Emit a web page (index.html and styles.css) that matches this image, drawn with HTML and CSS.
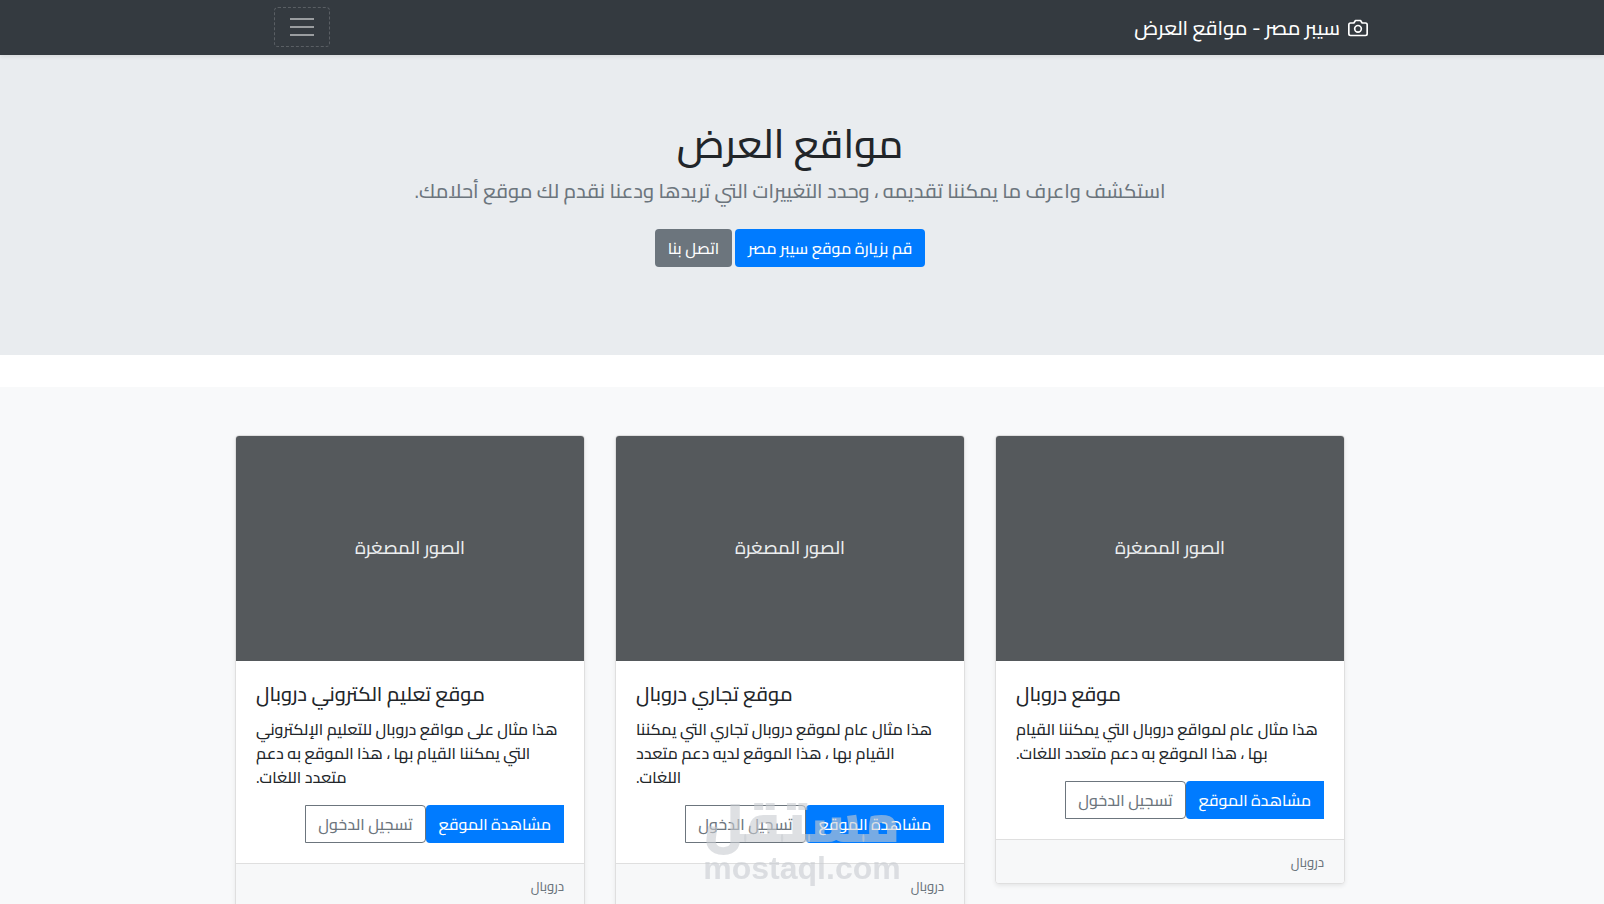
FILE: index.html
```html
<!DOCTYPE html>
<html lang="ar" dir="rtl">

<head>
	<meta charset="UTF-8">
	<meta name="viewport" content="width=device-width, initial-scale=1.0">
	<title>سيبر مصر - مواقع العرض</title>
	<link rel="stylesheet" href="styles.css">
</head>

<body>
	<header class="navbar">
		<div class="navbar-inner">
			<a class="brand" href="#">
				<svg width="20" height="20" viewBox="0 0 24 24" fill="none" stroke="currentColor" stroke-width="2" stroke-linecap="round" stroke-linejoin="round" aria-hidden="true">
					<path d="M23 19a2 2 0 0 1-2 2H3a2 2 0 0 1-2-2V8a2 2 0 0 1 2-2h4l2-3h6l2 3h4a2 2 0 0 1 2 2z"/>
					<circle cx="12" cy="13" r="4"/>
				</svg>
				<span>سيبر مصر - مواقع العرض</span>
			</a>
			<button class="toggler" type="button" aria-label="القائمة">
				<svg width="30" height="30" viewBox="0 0 30 30" stroke="currentColor" stroke-width="2" stroke-linecap="square" aria-hidden="true">
					<path d="M4 7h22M4 15h22M4 23h22"/>
				</svg>
			</button>
		</div>
	</header>

	<main>
		<section class="hero">
			<h1>مواقع العرض</h1>
			<p class="lead">استكشف واعرف ما يمكننا تقديمه ، وحدد التغييرات التي تريدها ودعنا نقدم لك موقع أحلامك.</p>
			<div class="hero-buttons">
				<a class="btn btn-primary" href="#">قم بزيارة موقع سيبر مصر</a>
				<a class="btn btn-secondary" href="#">اتصل بنا</a>
			</div>
		</section>

		<section class="album">
			<div class="cards">
				<article class="card">
					<div class="thumb">الصور المصغرة</div>
					<div class="card-body">
						<h2>موقع دروبال</h2>
						<p>هذا مثال عام لمواقع دروبال التي يمكننا القيام<br>بها ، هذا الموقع به دعم متعدد اللغات.</p>
						<div class="btn-group">
							<button type="button" class="btn btn-primary">مشاهدة الموقع</button>
							<button type="button" class="btn btn-outline">تسجيل الدخول</button>
						</div>
					</div>
					<footer class="card-footer">دروبال</footer>
				</article>

				<article class="card">
					<div class="thumb">الصور المصغرة</div>
					<div class="card-body">
						<h2>موقع تجاري دروبال</h2>
						<p>هذا مثال عام لموقع دروبال تجاري التي يمكننا<br>القيام بها ، هذا الموقع لديه دعم متعدد<br>اللغات.</p>
						<div class="btn-group">
							<button type="button" class="btn btn-primary">مشاهدة الموقع</button>
							<button type="button" class="btn btn-outline">تسجيل الدخول</button>
						</div>
					</div>
					<footer class="card-footer">دروبال</footer>
				</article>

				<article class="card">
					<div class="thumb">الصور المصغرة</div>
					<div class="card-body">
						<h2>موقع تعليم الكتروني دروبال</h2>
						<p>هذا مثال على مواقع دروبال للتعليم الإلكتروني<br>التي يمكننا القيام بها ، هذا الموقع به دعم<br>متعدد اللغات.</p>
						<div class="btn-group">
							<button type="button" class="btn btn-primary">مشاهدة الموقع</button>
							<button type="button" class="btn btn-outline">تسجيل الدخول</button>
						</div>
					</div>
					<footer class="card-footer">دروبال</footer>
				</article>
			</div>
		</section>
	</main>

	<div class="watermark">
		<span class="watermark-ar">مستقل</span>
		<span class="watermark-en">mostaql.com</span>
	</div>
</body>

</html>
```

FILE: styles.css
```css
*,
*::before,
*::after {
	box-sizing: border-box;
}

body {
	margin: 0;
	font-family: Cairo, "DejaVu Sans", sans-serif;
	font-size: 16px;
	font-weight: 500;
	line-height: 24px;
	color: #212529;
	background: #fff;
}

h1, h2, p {
	margin: 0;
	font-weight: 500;
}

a {
	text-decoration: none;
}

/* Navbar */
.navbar {
	position: relative;
	background: #343a40;
	box-shadow: 0 2px 4px rgba(0, 0, 0, 0.075);
}

.navbar-inner {
	display: flex;
	align-items: center;
	justify-content: space-between;
	max-width: 1140px;
	margin: 0 auto;
	padding: 7px 4px 8px 42px;
}

.brand {
	display: flex;
	align-items: center;
	gap: 8px;
	padding-top: 2px;
	color: #fff;
	font-size: 20px;
}

.toggler {
	display: flex;
	align-items: center;
	justify-content: center;
	width: 56px;
	height: 40px;
	padding: 0;
	color: rgba(255, 255, 255, 0.5);
	background: none;
	border: 1px dashed #5a5f64;
	border-radius: 4px;
}

/* Hero */
.hero {
	padding: 65px 24px 88px 0;
	text-align: center;
	background: #e9ecef;
	margin-bottom: 32px;
}

.hero h1 {
	font-size: 40px;
	line-height: 48px;
	margin-bottom: 8px;
}

.lead {
	font-size: 20px;
	line-height: 30px;
	color: #6c757d;
	margin-bottom: 23px;
}

.hero-buttons {
	display: flex;
	justify-content: center;
	gap: 3px;
}

/* Buttons */
.btn {
	height: 38px;
	padding: 6px 12px;
	border: 1px solid transparent;
	border-radius: 4px;
	font-family: inherit;
	font-size: 16px;
	font-weight: 500;
	line-height: 24px;
	white-space: nowrap;
}

.btn-primary {
	color: #fff;
	background: #007bff;
}

.btn-secondary {
	color: #fff;
	background: #6c757d;
}

.btn-outline {
	color: #6c757d;
	background: transparent;
	border-color: #6c757d;
}

.btn-group {
	display: flex;
}

.btn-group .btn-primary {
	border-radius: 4px 0 0 4px;
}

.btn-group .btn-outline {
	border-radius: 0 4px 4px 0;
}

/* Cards */
.album {
	padding: 48px 24px 48px 0;
	background: #f8f9fa;
}

.cards {
	display: grid;
	grid-template-columns: repeat(3, 1fr);
	align-items: start;
	gap: 30px;
	max-width: 1110px;
	margin: 0 auto;
}

.card {
	background: #fff;
	border: 1px solid #dfdfdf;
	border-radius: 4px;
	box-shadow: 0 2px 4px rgba(0, 0, 0, 0.075);
	overflow: hidden;
}

.thumb {
	display: flex;
	align-items: center;
	justify-content: center;
	height: 225px;
	padding-bottom: 2px;
	color: #eceeef;
	background: #55595c;
	font-size: 18px;
}

.card-body {
	padding: 20px;
}

.card h2 {
	padding-top: 1px;
	font-size: 20px;
	line-height: 24px;
	margin-bottom: 11px;
	text-align: left;
}

.card p {
	margin-bottom: 16px;
	text-align: left;
	white-space: nowrap;
}

.card-footer {
	padding: 13px 20px 11px;
	font-size: 13px;
	line-height: 19px;
	color: #6c757d;
	background: #f7f8f9;
	border-top: 1px solid #dfdfdf;
}

/* Watermark */
.watermark {
	position: fixed;
	bottom: 18px;
	left: 50%;
	transform: translateX(-50%);
	display: flex;
	flex-direction: column;
	align-items: center;
	color: rgba(200, 204, 208, 0.6);
	font-weight: 700;
	pointer-events: none;
}

.watermark-ar {
	font-size: 54px;
	font-weight: 900;
	line-height: 54px;
}

.watermark-en {
	font-family: "Liberation Sans", sans-serif;
	font-size: 32px;
	line-height: 36px;
}
```
